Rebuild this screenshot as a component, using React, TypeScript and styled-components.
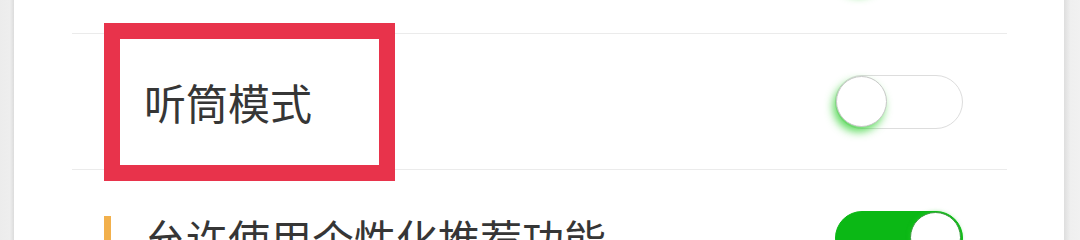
import React, { useState } from 'react';
import styled, { createGlobalStyle } from 'styled-components';

const GlobalStyle = createGlobalStyle`
  html, body {
    margin: 0;
    padding: 0;
    height: 100%;
    overflow: hidden;
    background: #ffffff;
    font-family: "Noto Sans CJK SC", "Noto Sans", sans-serif;
  }
`

interface Item {
  label: string,
  on: boolean,
  mark?: 'box' | 'bar'
}

// 첫 줄은 위로 잘려서 스위치 그림자만 보임
const items: Item[] = [
  { label: '', on: false },
  { label: '听筒模式', on: false, mark: 'box' },
  { label: '允许使用个性化推荐功能', on: true, mark: 'bar' },
]

const App = () => {
  const [list, setList] = useState(items)

  const toggle = (i: number) => {
    setList(list.map((it, idx) => idx === i ? { ...it, on: !it.on } : it))
  }

  return (
    <Page>
      <GlobalStyle />
      <Side className='left' />
      <Card>
        <List>
          {list.map((it, i) => (
            <Row key={i}>
              {it.mark === 'box' && <Highlight />}
              {it.mark === 'bar' && <Marker />}
              <Label>{it.label}</Label>
              <Switch $on={it.on} onClick={() => toggle(i)}>
                <span />
              </Switch>
            </Row>
          ))}
        </List>
      </Card>
      <Side className='right' />
    </Page>
  );
};

const Page = styled.div`
  width: 1080px;
  height: 100vh;
  min-height: 234px;
  display: flex;
  overflow: hidden;
`
const Side = styled.div`
  flex-shrink: 0;
  &.left {
    width: 14px;
    background: linear-gradient(to right, #ececec 0%, #eeeeee 70%, #dcdcdc 100%);
  }
  &.right {
    width: 16px;
    background: linear-gradient(to right, #dedede 0%, #efefef 40%, #f1f1f1 100%);
  }
`
const Card = styled.div`
  flex: 1;
  background: #ffffff;
  overflow: hidden;
`
const List = styled.div`
  margin-top: -102px;
  padding: 0 57px 0 58px;
`
const Row = styled.div`
  position: relative;
  height: 135px;
  border-top: 1px solid #ebebeb;
  display: flex;
  align-items: center;
  justify-content: space-between;
  padding: 0 44px 0 72px;
  &:first-child {
    border-top: none;
  }
`
const Label = styled.p`
  margin: 0;
  font-size: 42px;
  color: #363636;
  position: relative;
  z-index: 1;
`
const Highlight = styled.div`
  position: absolute;
  left: 32px;
  top: -11px;
  width: 291px;
  height: 158px;
  box-sizing: border-box;
  border: 16px solid #e8334b;
  z-index: 2;
`
const Marker = styled.div`
  position: absolute;
  left: 32px;
  top: 46px;
  width: 7px;
  height: 60px;
  background: #f2b04c;
`
const Switch = styled.div<{ $on: boolean }>`
  position: relative;
  width: 128px;
  height: 54px;
  box-sizing: border-box;
  border-radius: 27px;
  border: 1.5px solid ${props => props.$on ? '#0bb815' : '#dddddd'};
  background: ${props => props.$on ? '#0bb815' : '#ffffff'};
  cursor: pointer;
  span {
    position: absolute;
    top: 0;
    left: ${props => props.$on ? '74px' : '0'};
    width: 51px;
    height: 51px;
    border-radius: 50%;
    background: #ffffff;
    box-sizing: border-box;
    border: 1px solid ${props => props.$on ? '#3c9a40' : '#c8c8c8'};
    box-shadow: ${props => props.$on
      ? '0 0 4px rgba(40, 200, 40, 0.6)'
      : '-3px 5px 8px rgba(30, 205, 30, 0.7)'};
  }
`

export default App;
